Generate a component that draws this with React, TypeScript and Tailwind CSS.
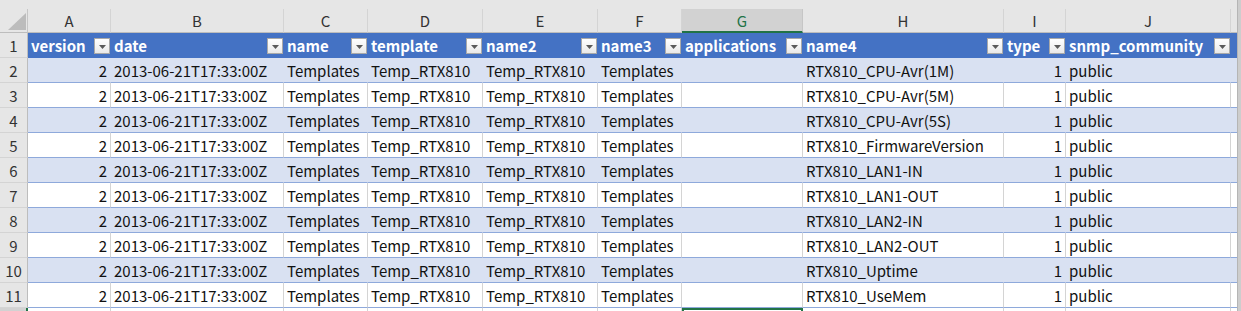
import React from "react";

const cols = ["A", "B", "C", "D", "E", "F", "G", "H", "I", "J", ""];
const heads = ["version", "date", "name", "template", "name2", "name3", "applications", "name4", "type", "snmp_community"];
const name4s = [
  "RTX810_CPU-Avr(1M)",
  "RTX810_CPU-Avr(5M)",
  "RTX810_CPU-Avr(5S)",
  "RTX810_FirmwareVersion",
  "RTX810_LAN1-IN",
  "RTX810_LAN1-OUT",
  "RTX810_LAN2-IN",
  "RTX810_LAN2-OUT",
  "RTX810_Uptime",
  "RTX810_UseMem",
];

const grid = "grid grid-cols-[28px_83px_173px_84px_115px_115px_84px_121px_201px_62px_165px_6px]";

const FilterButton = () => (
  <div className="w-[16px] h-[16px] shrink-0 border border-[#a9a9a9] bg-gradient-to-b from-white to-[#e9e9e9] flex items-center justify-center">
    <svg width="7" height="4" viewBox="0 0 7 4" className="mt-[2px]">
      <polygon points="0,0 7,0 3.5,4" fill="#5a5a5a" />
    </svg>
  </div>
);

const App: React.FC = () => {
  return (
    <div
      className="w-[1241px] h-[311px] overflow-hidden bg-[#e6e6e6] flex text-[15px] leading-none"
      style={{ fontFamily: "'Noto Sans CJK JP', 'Noto Sans', sans-serif" }}
    >
      <div className="w-[1237px] flex flex-col">
        {/* top strip */}
        <div className="h-[9px] bg-[#e6e6e6] shrink-0" />

        {/* column letters */}
        <div className={`${grid} h-[24px] shrink-0`}>
          <div className="relative border-r border-[#c6c6c6] border-b border-b-[#bdbdbd] bg-[#e6e6e6]">
            <svg width="18" height="17" viewBox="0 0 18 17" className="absolute left-[8px] top-[4px]">
              <polygon points="0,17 18,17 18,0" fill="#bcbcbc" />
            </svg>
          </div>
          {cols.map((c, i) =>
            c === "G" ? (
              <div
                key={i}
                className="flex items-center justify-center bg-[#d2d2d2] border-r border-[#c6c6c6] border-b-2 border-b-[#217346] text-[#217346]"
              >
                {c}
              </div>
            ) : (
              <div
                key={i}
                className={`flex items-center justify-center bg-[#e6e6e6] border-b border-b-[#bdbdbd] text-[#333] ${c ? "border-r border-[#d4d4d4]" : ""}`}
              >
                {c}
              </div>
            )
          )}
        </div>

        {/* header row 1 */}
        <div className={`${grid} h-[25px] shrink-0`}>
          <div className="flex items-center justify-center bg-[#e6e6e6] border-r border-[#bdbdbd] border-b border-b-[#d4d4d4] text-[#333]">
            1
          </div>
          {heads.map((h) => (
            <div key={h} className="flex items-center justify-between bg-[#4472c4] pl-[3px] pr-[1px] text-white font-bold">
              <span>{h}</span>
              <FilterButton />
            </div>
          ))}
          <div className="bg-[#4472c4]" />
        </div>

        {/* data rows */}
        {name4s.map((n4, r) => {
          const band = r % 2 === 0;
          const bg = band ? "bg-[#d9e1f2]" : "bg-white";
          const vline = band ? "border-r border-r-[#d9e1f2]" : "border-r border-r-[#d4d4d4]";
          const cell = `${bg} ${vline} border-b border-b-[#8ea9db] flex items-center px-[3px] text-[#111] whitespace-nowrap overflow-hidden`;
          return (
            <div key={r} className={`${grid} h-[25px] shrink-0`}>
              <div className="flex items-center justify-center bg-[#e6e6e6] border-r border-[#bdbdbd] border-b border-b-[#d4d4d4] text-[#333]">
                {r + 2}
              </div>
              <div className={`${cell} justify-end`}>2</div>
              <div className={cell}>2013-06-21T17:33:00Z</div>
              <div className={cell}>Templates</div>
              <div className={cell}>Temp_RTX810</div>
              <div className={cell}>Temp_RTX810</div>
              <div className={cell}>Templates</div>
              <div className={cell}></div>
              <div className={cell}>{n4}</div>
              <div className={`${cell} justify-end`}>1</div>
              <div className={cell}>public</div>
              <div className={`${bg} border-b border-b-[#8ea9db]`} />
            </div>
          );
        })}

        {/* partial row 12 */}
        <div className={`${grid} h-[3px] shrink-0`}>
          <div className="bg-[#d2d2d2] border-r-2 border-[#217346]" />
          <div className="bg-white border-r border-[#d4d4d4]" />
          <div className="bg-white border-r border-[#d4d4d4]" />
          <div className="bg-white border-r border-[#d4d4d4]" />
          <div className="bg-white border-r border-[#d4d4d4]" />
          <div className="bg-white border-r border-[#d4d4d4]" />
          <div className="bg-white border-r border-[#d4d4d4]" />
          <div className="bg-white border-t-2 border-x-2 border-[#217346]" />
          <div className="bg-white border-r border-[#d4d4d4]" />
          <div className="bg-white border-r border-[#d4d4d4]" />
          <div className="bg-white border-r border-[#d4d4d4]" />
          <div className="bg-white" />
        </div>
      </div>

      {/* scrollbar edge */}
      <div className="w-[4px] bg-[#cdcdcd] border-l border-[#b5b5b5]" />
    </div>
  );
};

export default App;
